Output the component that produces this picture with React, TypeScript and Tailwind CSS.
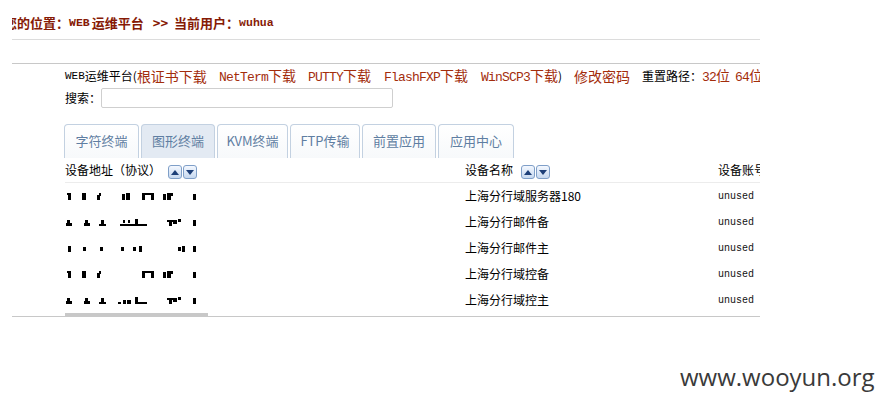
import React from 'react'

// censored address marks: [x, y, w, h] inside a 140x10 svg (x relative to x=65)
const marks: number[][][] = [
  [[3, 2, 3, 7], [2, 2, 2, 2], [17, 2, 4, 7], [32, 4, 3, 5], [34, 2, 2, 3], [57, 3, 3, 6], [61, 2, 4, 7], [77, 2, 12, 2], [77, 2, 3, 7], [86, 2, 3, 7], [98, 3, 3, 6], [102, 2, 4, 7], [106, 2, 2, 3], [128, 3, 3, 6]],
  [[1, 6, 6, 3], [2, 3, 3, 3], [19, 6, 6, 3], [20, 3, 3, 3], [34, 7, 7, 2], [36, 3, 3, 4], [55, 7, 15, 2], [58, 3, 2, 3], [63, 3, 2, 3], [70, 2, 3, 7], [72, 7, 10, 2], [102, 3, 6, 2], [104, 5, 3, 4], [108, 3, 4, 4], [113, 2, 3, 3], [128, 3, 3, 6]],
  [[3, 3, 3, 6], [18, 4, 3, 4], [35, 4, 3, 4], [56, 4, 3, 4], [68, 4, 3, 4], [74, 3, 3, 6], [113, 4, 3, 4], [117, 3, 3, 6], [128, 3, 3, 6]],
  [[3, 2, 3, 7], [2, 2, 2, 2], [17, 2, 4, 7], [32, 4, 3, 5], [34, 2, 2, 3], [77, 2, 12, 2], [77, 2, 3, 7], [86, 2, 3, 7], [98, 3, 3, 6], [102, 2, 4, 7], [106, 2, 2, 3], [128, 3, 3, 6]],
  [[1, 6, 6, 3], [2, 3, 3, 3], [19, 6, 6, 3], [20, 3, 3, 3], [34, 7, 7, 2], [36, 3, 3, 4], [53, 7, 3, 2], [58, 5, 3, 4], [62, 5, 4, 4], [70, 2, 3, 7], [72, 7, 10, 2], [102, 3, 6, 2], [104, 5, 3, 4], [108, 3, 4, 4], [113, 2, 3, 3], [128, 3, 3, 6]],
]

const devices = ['上海分行域服务器180', '上海分行邮件备', '上海分行邮件主', '上海分行域控备', '上海分行域控主']

const tabs = [
  { label: '字符终端', w: 'w-[75px]', active: false },
  { label: '图形终端', w: 'w-[74px]', active: true },
  { label: 'KVM终端', w: 'w-[71px]', active: false },
  { label: 'FTP传输', w: 'w-[70px]', active: false },
  { label: '前置应用', w: 'w-[74px]', active: false },
  { label: '应用中心', w: 'w-[76px]', active: false },
]

function Mono({ children, className = '' }: { children: React.ReactNode; className?: string }) {
  return <span className={`font-['Liberation_Mono',monospace] ${className}`}>{children}</span>
}

// half-width latin in the links, 7px a glyph like the bitmap font
function Latin({ children }: { children: React.ReactNode }) {
  return <Mono className="text-[13px] tracking-[-0.8px]">{children}</Mono>
}

function SortButtons() {
  return (
    <span className="inline-flex gap-[1px]">
      {[true, false].map((up) => (
        <span
          key={String(up)}
          className="flex h-[14px] w-[14px] items-center justify-center rounded-[3px] border border-[#7f9fc8] bg-gradient-to-b from-[#f4f8ff] to-[#c6d8ef]"
        >
          <svg width="8" height="5" viewBox="0 0 8 5">
            {up ? <polygon points="4,0 8,5 0,5" fill="#1d3f78" /> : <polygon points="0,0 8,0 4,5" fill="#1d3f78" />}
          </svg>
        </span>
      ))}
    </span>
  )
}

export default function App() {
  return (
    <div className="relative h-[405px] w-[885px] overflow-hidden bg-white font-['Noto_Sans_CJK_SC',sans-serif] text-black">
      <div className="ml-[12px] w-[748px] overflow-hidden">
        {/* location bar */}
        <div className="flex h-[39px] items-center whitespace-nowrap pt-[6px] text-[13px] font-bold text-[#861a05]">
          <span className="-ml-[8px]">您的位置：</span>
          <Mono className="text-[11.5px]">WEB</Mono>
          <span className="ml-[2px]">运维平台</span>
          <span className="ml-[9px]">&gt;&gt;</span>
          <span className="ml-[6px]">当前用户：</span>
          <Mono className="text-[11.5px]">wuhua</Mono>
        </div>
        <div className="h-[1px] bg-[#dcdcdc]" />
        <div className="h-[23px]" />
        <div className="h-[1px] bg-[#c8c8c8]" />

        <div className="pl-[53px]">
          {/* links */}
          <div className="flex h-[24px] items-center whitespace-nowrap text-[12px]">
            <Mono className="text-[11px]">WEB</Mono>
            <span>运维平台(</span>
            <span className="text-[14px] text-[#a32d0c]">根证书下载</span>
            <span className="ml-[12px] text-[14px] text-[#a32d0c]"><Latin>NetTerm</Latin>下载</span>
            <span className="ml-[12px] text-[14px] text-[#a32d0c]"><Latin>PUTTY</Latin>下载</span>
            <span className="ml-[13px] text-[14px] text-[#a32d0c]"><Latin>FlashFXP</Latin>下载</span>
            <span className="ml-[13px] text-[14px] text-[#a32d0c]"><Latin>WinSCP3</Latin>下载</span>
            <span>)</span>
            <span className="ml-[12px] text-[14px] text-[#a32d0c]">修改密码</span>
            <span className="ml-[12px]">重置路径：</span>
            <span className="text-[14px] text-[#a32d0c]"><Latin>32</Latin>位</span>
            <span className="ml-[5px] text-[14px] text-[#a32d0c]"><Latin>64</Latin>位</span>
          </div>

          {/* search */}
          <div className="flex h-[20px] items-center text-[12px]">
            <span className="w-[36px]">搜索：</span>
            <input className="h-[20px] w-[292px] rounded-[2px] border border-[#cfcfcf] bg-white outline-none" />
          </div>

          {/* tabs */}
          <div className="mt-[16px] flex h-[34px] gap-[2px] -ml-[1px]">
            {tabs.map((t) => (
              <div
                key={t.label}
                className={`flex ${t.w} shrink-0 items-center justify-center rounded-t-[4px] border border-b-0 border-[#c3d1e1] pb-[2px] text-[13px] text-[#5f7ea2] ${
                  t.active ? 'bg-[#e3eaf3]' : 'bg-gradient-to-b from-white to-[#f7f9fb]'
                }`}
              >
                {t.label}
              </div>
            ))}
          </div>

          {/* table header */}
          <div className="flex h-[25px] items-center whitespace-nowrap border-b border-[#ececec] text-[12px]">
            <div className="flex w-[400px] shrink-0 items-center">
              <span>设备地址（协议）</span>
              <span className="ml-[7px]"><SortButtons /></span>
            </div>
            <div className="flex w-[253px] shrink-0 items-center">
              <span>设备名称</span>
              <span className="ml-[8px]"><SortButtons /></span>
            </div>
            <div className="shrink-0">设备账号</div>
          </div>

          {/* rows */}
          {devices.map((name, i) => (
            <div key={name} className="flex h-[26px] items-center whitespace-nowrap text-[12px]">
              <div className="w-[400px] shrink-0">
                <svg width="140" height="10" className="block">
                  {marks[i].map(([x, y, w, h], j) => (
                    <rect key={j} x={x} y={y} width={w} height={h} fill="#000" />
                  ))}
                </svg>
              </div>
              <div className="w-[253px] shrink-0">{name}</div>
              <Mono className="text-[10px] text-[#111]">unused</Mono>
            </div>
          ))}
          <div className="h-[3px] w-[143px] bg-[#c8c8c8]" />
        </div>
        <div className="h-[1px] bg-[#c8c8c8]" />
      </div>

      <div className="absolute left-[680px] top-[359px] font-['Open_Sans',sans-serif] text-[24px] text-[#3a3a3a]">
        www.wooyun.org
      </div>
    </div>
  )
}
